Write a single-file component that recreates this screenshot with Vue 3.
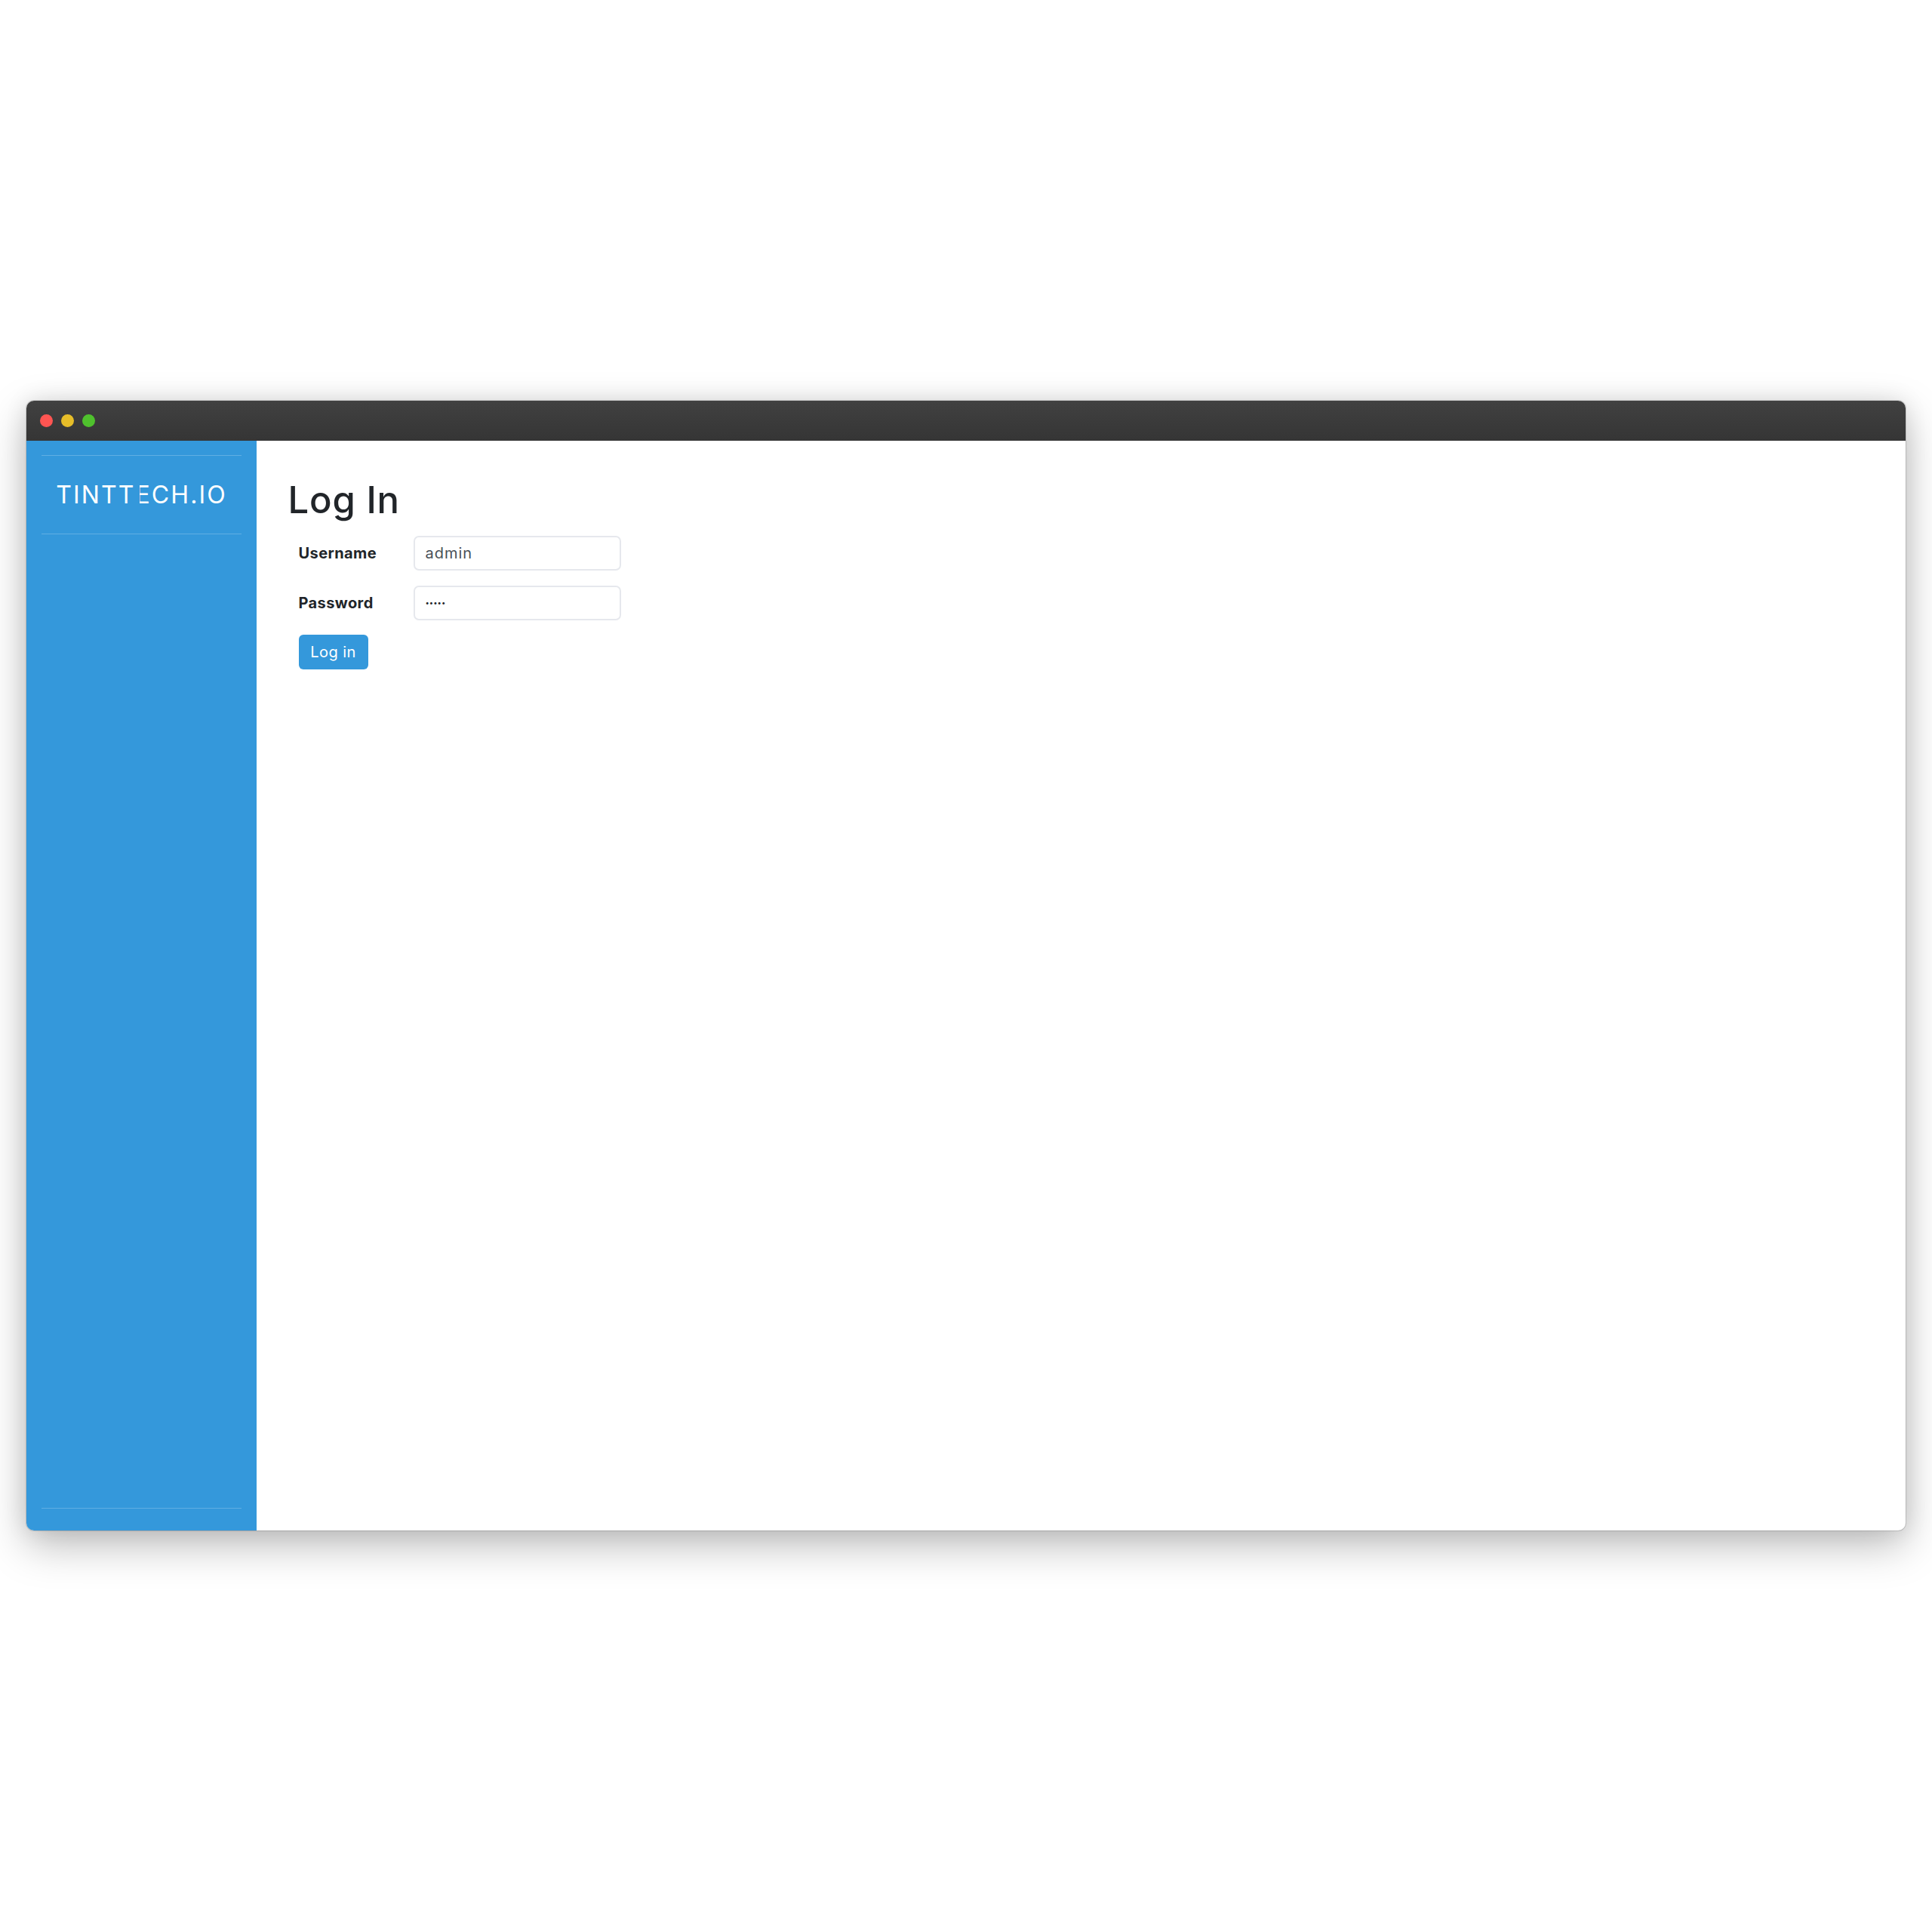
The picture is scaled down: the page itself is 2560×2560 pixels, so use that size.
<script setup>
const dots = ['red', 'amber', 'green']
</script>

<template>
  <div class="page">
    <div class="window">
      <header class="titlebar">
        <span v-for="d in dots" :key="d" class="dot" :class="d"></span>
      </header>
      <div class="body">
        <aside class="sidebar">
          <div class="brand">
            <span class="logo">TINTT<span class="e">E</span>CH.IO</span>
          </div>
          <div class="sidebar-foot"></div>
        </aside>
        <main class="content">
          <h1>Log In</h1>
          <form class="form" @submit.prevent>
            <div class="row">
              <label for="u">Username</label>
              <input id="u" type="text" value="admin" />
            </div>
            <div class="row last">
              <label for="p">Password</label>
              <input id="p" class="secret" type="password" value="admin" />
            </div>
            <button type="submit">Log in</button>
          </form>
        </main>
      </div>
    </div>
  </div>
</template>

<style>
html, body { margin: 0; background: #fff; }
</style>

<style scoped>
.page {
  box-sizing: border-box;
  height: 2560px;
  padding: 531px 35px 0;
  font-family: Inter, "Noto Sans", sans-serif;
  color: #212529;
}
.window {
  height: 1497px;
  border-radius: 10px;
  overflow: hidden;
  display: flex;
  flex-direction: column;
  background: #fff;
  box-shadow: 0 0 0 1px rgba(0,0,0,.14), 0 20px 55px rgba(0,0,0,.26), 0 0 30px rgba(0,0,0,.1);
}
.titlebar {
  height: 52.5px;
  flex: none;
  display: flex;
  align-items: center;
  gap: 11px;
  padding-left: 18px;
  background: linear-gradient(#414141, #353535);
}
.dot { width: 17px; height: 17px; border-radius: 50%; }
.red { background: #ff5552; }
.amber { background: #e6bd29; }
.green { background: #4fc12d; }
.body { flex: 1; display: flex; min-height: 0; }
.sidebar {
  width: 304.5px;
  flex: none;
  box-sizing: border-box;
  padding: 19.5px 19.5px 29.5px 20px;
  background: #3498db;
  display: flex;
  flex-direction: column;
  justify-content: space-between;
}
.brand {
  height: 104.5px;
  box-sizing: border-box;
  padding-top: 2px;
  border-top: 1.5px solid rgba(255,255,255,.22);
  border-bottom: 1.5px solid rgba(255,255,255,.22);
  display: flex;
  align-items: center;
  justify-content: center;
}
.logo {
  color: #fff;
  font-size: 32px;
  font-weight: 400;
  letter-spacing: 2.1px;
  line-height: 1;
  white-space: nowrap;
}
.e { position: relative; display: inline-block; }
.e::before {
  content: "";
  position: absolute;
  left: 0;
  top: 0;
  bottom: 0;
  width: 6px;
  background: #3498db;
}
.sidebar-foot { border-top: 1.5px solid rgba(255,255,255,.22); }
.content { flex: 1; padding: 49.5px 42px; }
h1 {
  margin: 0 0 16.5px;
  font-size: 49px;
  font-weight: 500;
  letter-spacing: .8px;
  line-height: 60px;
}
.form { padding-left: 14px; display: flex; flex-direction: column; align-items: flex-start; }
.row { display: flex; align-items: center; margin-bottom: 20px; }
.row.last { margin-bottom: 19px; }
label { width: 152px; font-size: 20px; font-weight: 700; letter-spacing: .4px; }
input {
  box-sizing: border-box;
  width: 275px;
  height: 46px;
  padding: 0 14px;
  border: 2px solid #e6e8ed;
  border-radius: 7px;
  font: 400 20px Inter, "Noto Sans", sans-serif;
  letter-spacing: 1px;
  color: #495057;
  outline: none;
}
.secret { font-size: 9.5px; letter-spacing: 0; color: #212529; }
button {
  width: 92px;
  height: 46px;
  padding: 0;
  border: 0;
  border-radius: 6px;
  background: #3498db;
  color: #fff;
  font: 400 20px Inter, "Noto Sans", sans-serif;
  letter-spacing: .4px;
}
</style>
